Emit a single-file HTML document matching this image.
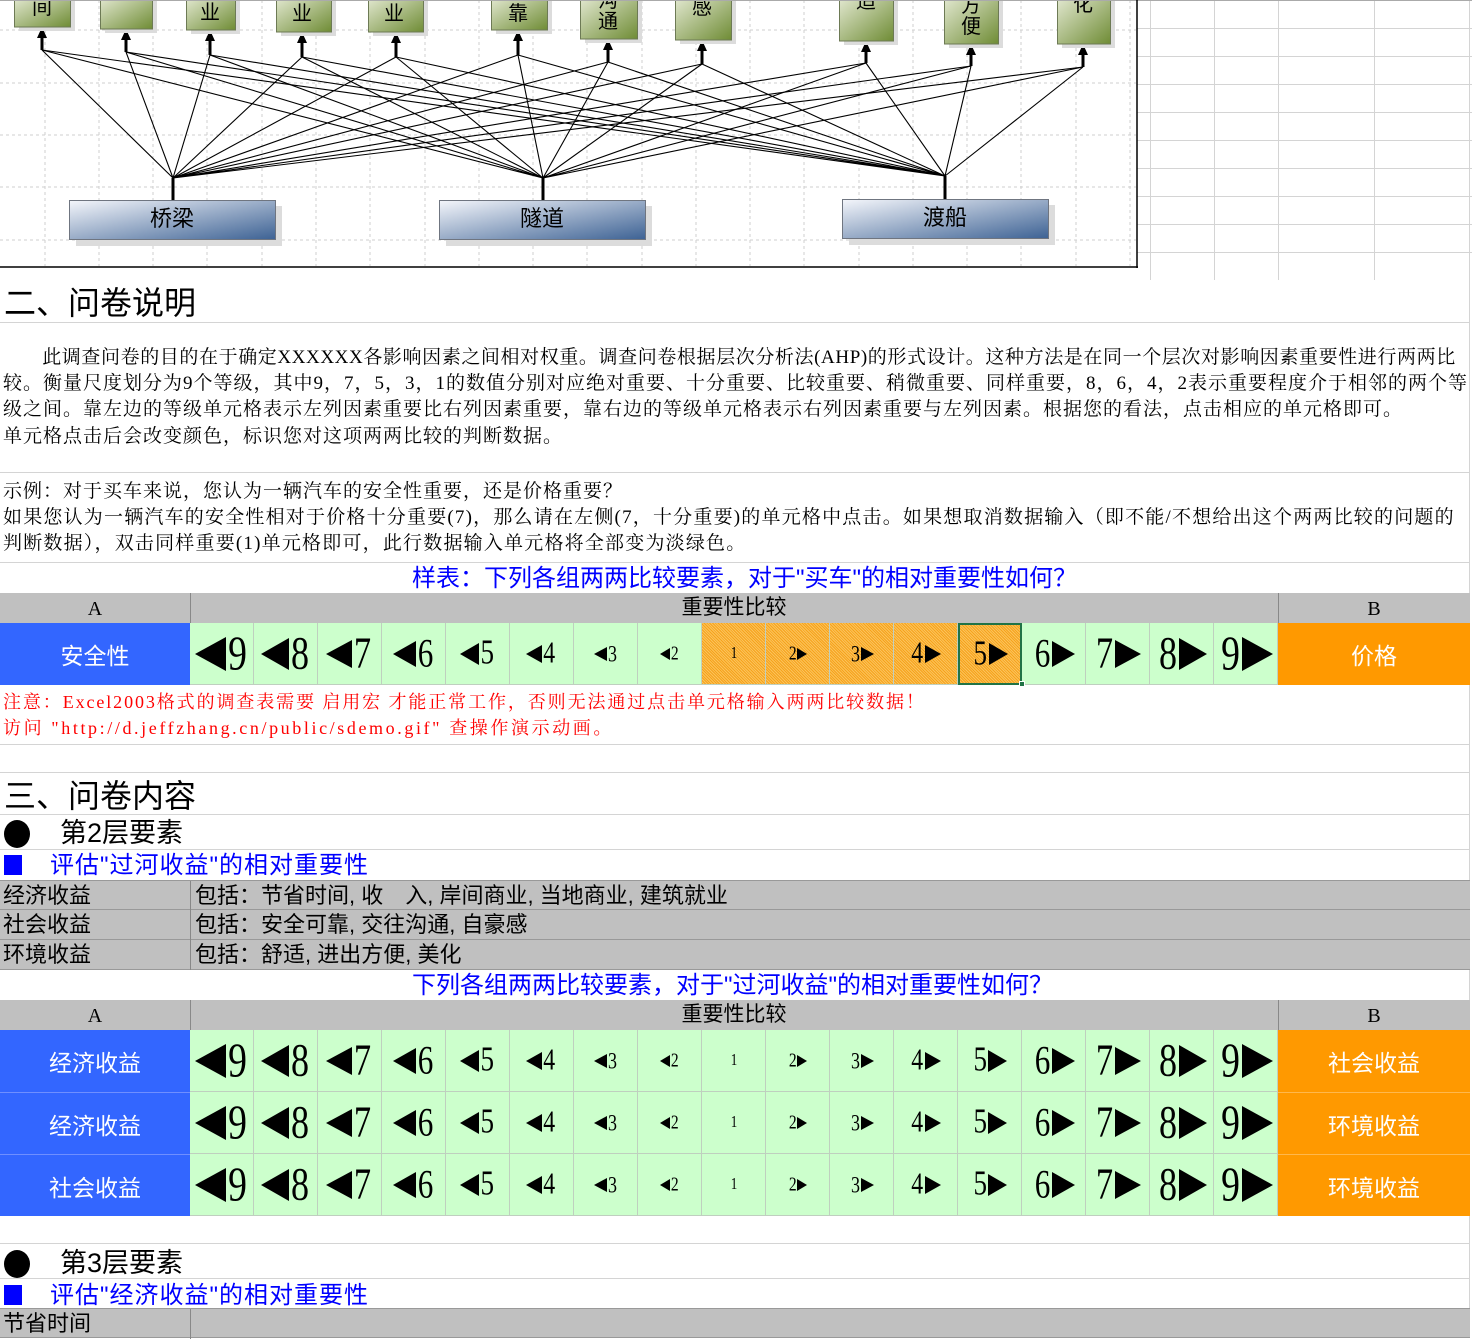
<!DOCTYPE html>
<html><head><meta charset="utf-8">
<style>
*{margin:0;padding:0;box-sizing:border-box}
body{width:1472px;height:1336px;position:relative;overflow:hidden;background:#fff;font-family:"Liberation Serif","Noto Serif CJK SC",serif;color:#000}
.abs{position:absolute}
.hl{position:absolute;left:0;width:1470px;height:1px;background:#d4d4d4}
.cjk{font-family:"Liberation Sans","Noto Sans CJK SC",sans-serif}
.ser{font-family:"Liberation Serif","Noto Serif CJK SC",serif}
.txt{position:absolute;left:3px;font-size:19px;white-space:nowrap;line-height:26px;letter-spacing:1px}
.row{position:absolute;left:0;width:1470px;height:62px;display:flex}
.a{width:190px;background:#3366ff;color:#fff;font:23px "Liberation Sans","Noto Sans CJK SC",sans-serif;display:flex;align-items:center;justify-content:center}
.bb{width:192px;background:#ff9900;color:#fff;font:23px "Liberation Sans","Noto Sans CJK SC",sans-serif;display:flex;align-items:center;justify-content:center}
.c{width:64px;background:#ccffcc;border-right:1px solid #bfcfbf;border-bottom:1px solid #bfcfbf;display:flex;align-items:center;justify-content:center;font-family:"Liberation Serif",serif;line-height:1}
.c span{display:inline-block;transform:scale(.82,1.05)}
.L{display:inline-block;width:0;height:0;border-top:calc(var(--t)/2) solid transparent;border-bottom:calc(var(--t)/2) solid transparent;border-right:calc(var(--t)*.9) solid #000}
.R{display:inline-block;width:0;height:0;border-top:calc(var(--t)/2) solid transparent;border-bottom:calc(var(--t)/2) solid transparent;border-left:calc(var(--t)*.9) solid #000}
.s9{font-size:46px;--t:35px}.s8{font-size:44px;--t:32px}.s7{font-size:42px;--t:29px}.s6{font-size:38px;--t:26px}
.s5{font-size:33px;--t:22px}.s4{font-size:29px;--t:18px}.s3{font-size:22px;--t:15px}.s2{font-size:19px;--t:12px}.s1{font-size:16px}
.o{background:repeating-linear-gradient(45deg,#f6a21c 0 1px,#fbc35a 1px 2px);}
.hdr{position:absolute;left:0;width:1470px;height:30px;background:#c0c0c0;font-size:20px}
.gray{position:absolute;left:0;width:1470px;height:30px;background:#c0c0c0;border-bottom:1px solid #999;font:22px "Liberation Sans","Noto Sans CJK SC",sans-serif;line-height:30px}
.gray div{position:absolute;top:0;height:30px}
.blue{position:absolute;color:#0000ff;font:24px "Liberation Sans","Noto Sans CJK SC",sans-serif;white-space:nowrap}
</style></head><body>

<svg class="abs" style="left:0;top:0" width="1472" height="280">
<g stroke="#d4d4d4" stroke-width="1">
<line x1="1150.5" y1="0" x2="1150.5" y2="280"/><line x1="1214.5" y1="0" x2="1214.5" y2="280"/><line x1="1278.5" y1="0" x2="1278.5" y2="280"/><line x1="1374.5" y1="0" x2="1374.5" y2="280"/><line x1="1469.5" y1="0" x2="1469.5" y2="280"/>
<line x1="1137" y1="28.5" x2="1472" y2="28.5"/><line x1="1137" y1="56.5" x2="1472" y2="56.5"/><line x1="1137" y1="84.5" x2="1472" y2="84.5"/><line x1="1137" y1="112.5" x2="1472" y2="112.5"/><line x1="1137" y1="140.5" x2="1472" y2="140.5"/><line x1="1137" y1="168.5" x2="1472" y2="168.5"/><line x1="1137" y1="196.5" x2="1472" y2="196.5"/><line x1="1137" y1="224.5" x2="1472" y2="224.5"/><line x1="1137" y1="252.5" x2="1472" y2="252.5"/>
<line x1="0" y1="280.5" x2="1472" y2="280.5"/>
</g>
<g stroke="#cfcfcf" stroke-dasharray="3,3" stroke-width="1">
<line x1="45" y1="0" x2="45" y2="266"/><line x1="99" y1="0" x2="99" y2="266"/><line x1="153" y1="0" x2="153" y2="266"/><line x1="207" y1="0" x2="207" y2="266"/><line x1="262" y1="0" x2="262" y2="266"/><line x1="316" y1="0" x2="316" y2="266"/><line x1="370" y1="0" x2="370" y2="266"/><line x1="425" y1="0" x2="425" y2="266"/><line x1="479" y1="0" x2="479" y2="266"/><line x1="533" y1="0" x2="533" y2="266"/><line x1="587" y1="0" x2="587" y2="266"/><line x1="642" y1="0" x2="642" y2="266"/><line x1="696" y1="0" x2="696" y2="266"/><line x1="750" y1="0" x2="750" y2="266"/><line x1="804" y1="0" x2="804" y2="266"/><line x1="859" y1="0" x2="859" y2="266"/><line x1="913" y1="0" x2="913" y2="266"/><line x1="967" y1="0" x2="967" y2="266"/><line x1="1021" y1="0" x2="1021" y2="266"/><line x1="1076" y1="0" x2="1076" y2="266"/><line x1="1130" y1="0" x2="1130" y2="266"/>
<line x1="0" y1="30" x2="1136" y2="30"/><line x1="0" y1="83" x2="1136" y2="83"/><line x1="0" y1="135" x2="1136" y2="135"/><line x1="0" y1="187" x2="1136" y2="187"/><line x1="0" y1="240" x2="1136" y2="240"/>
</g>
<defs>
<linearGradient id="gg" x1="0" y1="0" x2="1" y2="1"><stop offset="0" stop-color="#e2e8d0"/><stop offset="1" stop-color="#6f8c35"/></linearGradient>
<linearGradient id="bg" x1="0" y1="0" x2="1" y2="1"><stop offset="0" stop-color="#f4f6fb"/><stop offset="1" stop-color="#3d6294"/></linearGradient>
</defs>
<g stroke="#000" stroke-width="1.1" fill="none">
<path d="M173 178L42 50M173 178L126 52M173 178L210 55M173 178L302 57M173 178L396 57M173 178L518 55M173 178L608 62M173 178L702 64M173 178L866 63M173 178L971 66M173 178L1083 67"/>
<path d="M543 178L42 50M543 178L126 52M543 178L210 55M543 178L302 57M543 178L396 57M543 178L518 55M543 178L608 62M543 178L702 64M543 178L866 63M543 178L971 66M543 178L1083 67"/>
<path d="M945 176L42 50M945 176L126 52M945 176L210 55M945 176L302 57M945 176L396 57M945 176L518 55M945 176L608 62M945 176L702 64M945 176L866 63M945 176L971 66M945 176L1083 67"/>
</g>
<g stroke="#000" stroke-width="3">
<line x1="173" y1="178" x2="173" y2="201"/><line x1="543" y1="178" x2="543" y2="201"/><line x1="945" y1="176" x2="945" y2="200"/>
<line x1="42" y1="50" x2="42" y2="36"/><line x1="126" y1="52" x2="126" y2="38"/><line x1="210" y1="55" x2="210" y2="39"/><line x1="302" y1="57" x2="302" y2="41"/><line x1="396" y1="57" x2="396" y2="41"/><line x1="518" y1="55" x2="518" y2="39"/><line x1="608" y1="62" x2="608" y2="48"/><line x1="702" y1="64" x2="702" y2="49"/><line x1="866" y1="63" x2="866" y2="50"/><line x1="971" y1="66" x2="971" y2="53"/><line x1="1083" y1="67" x2="1083" y2="53"/>
</g>
<g fill="#000">
<path d="M42 27l-5 11h10z"/><path d="M126 29l-5 11h10z"/><path d="M210 30l-5 11h10z"/><path d="M302 32l-5 11h10z"/><path d="M396 32l-5 11h10z"/><path d="M518 30l-5 11h10z"/><path d="M608 39l-5 11h10z"/><path d="M702 40l-5 11h10z"/><path d="M866 41l-5 11h10z"/><path d="M971 44l-5 11h10z"/><path d="M1083 44l-5 11h10z"/>
</g>
<g fill="#dcdcdc">
<rect x="19" y="0" width="56" height="31"/><rect x="105" y="0" width="52" height="33"/><rect x="191" y="0" width="49" height="34"/><rect x="281" y="0" width="55" height="36"/><rect x="373" y="0" width="55" height="36"/><rect x="496" y="0" width="56" height="34"/><rect x="585" y="0" width="57" height="43"/><rect x="680" y="0" width="56" height="44"/><rect x="844" y="0" width="54" height="45"/><rect x="949" y="0" width="54" height="48"/><rect x="1062" y="0" width="53" height="48"/>
</g>
<g fill="url(#gg)" stroke="#6d7a55" stroke-width="1">
<rect x="14.5" y="-2" width="56" height="29"/><rect x="100.5" y="-2" width="52" height="31"/><rect x="186.5" y="-2" width="49" height="32"/><rect x="276.5" y="-2" width="55" height="34"/><rect x="368.5" y="-2" width="55" height="34"/><rect x="491.5" y="-2" width="56" height="32"/><rect x="580.5" y="-2" width="57" height="41"/><rect x="675.5" y="-2" width="56" height="42"/><rect x="839.5" y="-2" width="54" height="43"/><rect x="944.5" y="-2" width="54" height="46"/><rect x="1057.5" y="-2" width="53" height="46"/>
</g>
<g font-family="Liberation Sans,Noto Sans CJK SC,sans-serif" font-size="20" fill="#000" text-anchor="middle">
<text x="42" y="14">间</text><text x="210" y="19">业</text><text x="302" y="20">业</text><text x="394" y="20">业</text><text x="518" y="20">靠</text><text x="608" y="7">沟</text><text x="608" y="28">通</text><text x="702" y="14">感</text><text x="866" y="8">适</text><text x="971" y="12">方</text><text x="971" y="33">便</text><text x="1083" y="11">化</text>
</g>
<rect x="0" y="0" width="1472" height="1" fill="#aaa"/>
<g fill="#dcdcdc"><rect x="76" y="206" width="206" height="40"/><rect x="446" y="206" width="206" height="40"/><rect x="849" y="205" width="206" height="40"/></g>
<g fill="url(#bg)" stroke="#6f7580"><rect x="69.5" y="200.5" width="206" height="39"/><rect x="439.5" y="200.5" width="206" height="39"/><rect x="842.5" y="199.5" width="206" height="39"/></g>
<g font-family="Liberation Sans,Noto Sans CJK SC,sans-serif" font-size="22" fill="#000" text-anchor="middle">
<text x="172" y="226">桥梁</text><text x="542" y="226">隧道</text><text x="945" y="225">渡船</text>
</g>
<line x1="1137" y1="0" x2="1137" y2="268" stroke="#000" stroke-width="1.5"/>
<line x1="0" y1="267" x2="1138" y2="267" stroke="#000" stroke-width="1.5"/>
</svg>

<div class="abs" style="left:1469px;top:280px;width:1px;height:1056px;background:#d4d4d4"></div>

<div class="abs cjk" style="left:4px;top:283px;font-size:32px;line-height:40px">二、问卷说明</div>
<div class="hl" style="top:322px"></div>
<div class="txt" style="top:345px;left:3px;letter-spacing:.6px">　　此调查问卷的目的在于确定XXXXXX各影响因素之间相对权重。调查问卷根据层次分析法(AHP)的形式设计。这种方法是在同一个层次对影响因素重要性进行两两比</div>
<div class="txt" style="top:371px">较。衡量尺度划分为9个等级，其中9，7，5，3，1的数值分别对应绝对重要、十分重要、比较重要、稍微重要、同样重要，8，6，4，2表示重要程度介于相邻的两个等</div>
<div class="txt" style="top:397px">级之间。靠左边的等级单元格表示左列因素重要比右列因素重要，靠右边的等级单元格表示右列因素重要与左列因素。根据您的看法，点击相应的单元格即可。</div>
<div class="txt" style="top:424px">单元格点击后会改变颜色，标识您对这项两两比较的判断数据。</div>
<div class="hl" style="top:472px"></div>
<div class="txt" style="top:479px">示例：对于买车来说，您认为一辆汽车的安全性重要，还是价格重要？</div>
<div class="txt" style="top:505px;letter-spacing:1.2px">如果您认为一辆汽车的安全性相对于价格十分重要(7)，那么请在左侧(7，十分重要)的单元格中点击。如果想取消数据输入（即不能/不想给出这个两两比较的问题的</div>
<div class="txt" style="top:531px;letter-spacing:1.2px">判断数据），双击同样重要(1)单元格即可，此行数据输入单元格将全部变为淡绿色。</div>
<div class="hl" style="top:562px"></div>
<div class="blue" style="left:412px;top:564px;line-height:30px">样表：下列各组两两比较要素，对于"买车"的相对重要性如何？</div>

<div class="hdr" style="top:593px">
<div class="abs" style="left:0;top:0;width:190px;text-align:center;line-height:32px">A</div>
<div class="abs" style="left:190px;top:0;width:1px;height:30px;background:#888"></div>
<div class="abs cjk" style="left:190px;top:0;width:1088px;text-align:center;line-height:30px;font-size:21px">重要性比较</div>
<div class="abs" style="left:1278px;top:0;width:1px;height:30px;background:#888"></div>
<div class="abs" style="left:1278px;top:0;width:192px;text-align:center;line-height:32px">B</div>
</div>

<div class="row" style="top:623px">
<div class="a">安全性</div>
<div class="c s9"><i class="L"></i><span>9</span></div><div class="c s8"><i class="L"></i><span>8</span></div><div class="c s7"><i class="L"></i><span>7</span></div><div class="c s6"><i class="L"></i><span>6</span></div><div class="c s5"><i class="L"></i><span>5</span></div><div class="c s4"><i class="L"></i><span>4</span></div><div class="c s3"><i class="L"></i><span>3</span></div><div class="c s2"><i class="L"></i><span>2</span></div>
<div class="c s1 o"><span>1</span></div><div class="c s2 o"><span>2</span><i class="R"></i></div><div class="c s3 o"><span>3</span><i class="R"></i></div><div class="c s4 o"><span>4</span><i class="R"></i></div><div class="c s5 o" style="border:2px solid #217346"><span>5</span><i class="R"></i></div>
<div class="c s6"><span>6</span><i class="R"></i></div><div class="c s7"><span>7</span><i class="R"></i></div><div class="c s8"><span>8</span><i class="R"></i></div><div class="c s9"><span>9</span><i class="R"></i></div>
<div class="bb">价格</div>
</div>
<div class="abs" style="left:1019px;top:681px;width:6px;height:6px;background:#217346;border:1px solid #fff"></div>

<div class="abs ser" style="left:3px;top:689px;font-size:18px;line-height:26px;color:#ff0000;white-space:nowrap;letter-spacing:1.9px">注意：Excel2003格式的调查表需要 启用宏 才能正常工作，否则无法通过点击单元格输入两两比较数据！</div>
<div class="abs ser" style="left:3px;top:715px;font-size:18px;line-height:26px;color:#ff0000;white-space:nowrap;letter-spacing:2.6px">访问 "http://d.jeffzhang.cn/public/sdemo.gif" 查操作演示动画。</div>
<div class="hl" style="top:744px"></div>
<div class="hl" style="top:772px"></div>
<div class="abs cjk" style="left:4px;top:776px;font-size:32px;line-height:40px">三、问卷内容</div>
<div class="hl" style="top:814px"></div>
<div class="abs" style="left:4px;top:820px;width:26px;height:28px;border-radius:50%;background:#000"></div>
<div class="abs cjk" style="left:60px;top:815px;font-size:27px;line-height:36px">第2层要素</div>
<div class="hl" style="top:849px"></div>
<div class="abs" style="left:4px;top:855px;width:18px;height:20px;background:#0000ff"></div>
<div class="blue" style="left:50px;top:851px;line-height:30px;letter-spacing:1px">评估"过河收益"的相对重要性</div>

<div class="gray" style="top:880px;border-top:1px solid #999"><div style="left:3px">经济收益</div><div style="left:190px;width:1px;background:#888"></div><div style="left:195px">包括：节省时间, 收　入, 岸间商业, 当地商业, 建筑就业</div></div>
<div class="gray" style="top:910px"><div style="left:3px">社会收益</div><div style="left:190px;width:1px;background:#888"></div><div style="left:195px">包括：安全可靠, 交往沟通, 自豪感</div></div>
<div class="gray" style="top:940px"><div style="left:3px">环境收益</div><div style="left:190px;width:1px;background:#888"></div><div style="left:195px">包括：舒适, 进出方便, 美化</div></div>
<div class="blue" style="left:412px;top:971px;line-height:30px">下列各组两两比较要素，对于"过河收益"的相对重要性如何？</div>

<div class="hdr" style="top:1000px">
<div class="abs" style="left:0;top:0;width:190px;text-align:center;line-height:32px">A</div>
<div class="abs" style="left:190px;top:0;width:1px;height:30px;background:#888"></div>
<div class="abs cjk" style="left:190px;top:0;width:1088px;text-align:center;line-height:30px;font-size:21px">重要性比较</div>
<div class="abs" style="left:1278px;top:0;width:1px;height:30px;background:#888"></div>
<div class="abs" style="left:1278px;top:0;width:192px;text-align:center;line-height:32px">B</div>
</div>

<div class="row" style="top:1030px">
<div class="a">经济收益</div>
<div class="c s9"><i class="L"></i><span>9</span></div><div class="c s8"><i class="L"></i><span>8</span></div><div class="c s7"><i class="L"></i><span>7</span></div><div class="c s6"><i class="L"></i><span>6</span></div><div class="c s5"><i class="L"></i><span>5</span></div><div class="c s4"><i class="L"></i><span>4</span></div><div class="c s3"><i class="L"></i><span>3</span></div><div class="c s2"><i class="L"></i><span>2</span></div>
<div class="c s1"><span>1</span></div><div class="c s2"><span>2</span><i class="R"></i></div><div class="c s3"><span>3</span><i class="R"></i></div><div class="c s4"><span>4</span><i class="R"></i></div><div class="c s5"><span>5</span><i class="R"></i></div>
<div class="c s6"><span>6</span><i class="R"></i></div><div class="c s7"><span>7</span><i class="R"></i></div><div class="c s8"><span>8</span><i class="R"></i></div><div class="c s9"><span>9</span><i class="R"></i></div>
<div class="bb">社会收益</div>
</div>
<div class="row" style="top:1092px">
<div class="a" style="border-top:1px solid #6f8fff">经济收益</div>
<div class="c s9"><i class="L"></i><span>9</span></div><div class="c s8"><i class="L"></i><span>8</span></div><div class="c s7"><i class="L"></i><span>7</span></div><div class="c s6"><i class="L"></i><span>6</span></div><div class="c s5"><i class="L"></i><span>5</span></div><div class="c s4"><i class="L"></i><span>4</span></div><div class="c s3"><i class="L"></i><span>3</span></div><div class="c s2"><i class="L"></i><span>2</span></div>
<div class="c s1"><span>1</span></div><div class="c s2"><span>2</span><i class="R"></i></div><div class="c s3"><span>3</span><i class="R"></i></div><div class="c s4"><span>4</span><i class="R"></i></div><div class="c s5"><span>5</span><i class="R"></i></div>
<div class="c s6"><span>6</span><i class="R"></i></div><div class="c s7"><span>7</span><i class="R"></i></div><div class="c s8"><span>8</span><i class="R"></i></div><div class="c s9"><span>9</span><i class="R"></i></div>
<div class="bb" style="border-top:1px solid #ffb84d">环境收益</div>
</div>
<div class="row" style="top:1154px">
<div class="a" style="border-top:1px solid #6f8fff">社会收益</div>
<div class="c s9"><i class="L"></i><span>9</span></div><div class="c s8"><i class="L"></i><span>8</span></div><div class="c s7"><i class="L"></i><span>7</span></div><div class="c s6"><i class="L"></i><span>6</span></div><div class="c s5"><i class="L"></i><span>5</span></div><div class="c s4"><i class="L"></i><span>4</span></div><div class="c s3"><i class="L"></i><span>3</span></div><div class="c s2"><i class="L"></i><span>2</span></div>
<div class="c s1"><span>1</span></div><div class="c s2"><span>2</span><i class="R"></i></div><div class="c s3"><span>3</span><i class="R"></i></div><div class="c s4"><span>4</span><i class="R"></i></div><div class="c s5"><span>5</span><i class="R"></i></div>
<div class="c s6"><span>6</span><i class="R"></i></div><div class="c s7"><span>7</span><i class="R"></i></div><div class="c s8"><span>8</span><i class="R"></i></div><div class="c s9"><span>9</span><i class="R"></i></div>
<div class="bb" style="border-top:1px solid #ffb84d">环境收益</div>
</div>
<div class="hl" style="top:1243px"></div>
<div class="abs" style="left:4px;top:1250px;width:26px;height:28px;border-radius:50%;background:#000"></div>
<div class="abs cjk" style="left:60px;top:1245px;font-size:27px;line-height:36px">第3层要素</div>
<div class="hl" style="top:1278px"></div>
<div class="abs" style="left:4px;top:1285px;width:18px;height:20px;background:#0000ff"></div>
<div class="blue" style="left:50px;top:1281px;line-height:30px;letter-spacing:1px">评估"经济收益"的相对重要性</div>
<div class="gray" style="top:1308px;border-top:1px solid #999"><div style="left:3px">节省时间</div><div style="left:190px;width:1px;background:#888"></div></div>
</body></html>
